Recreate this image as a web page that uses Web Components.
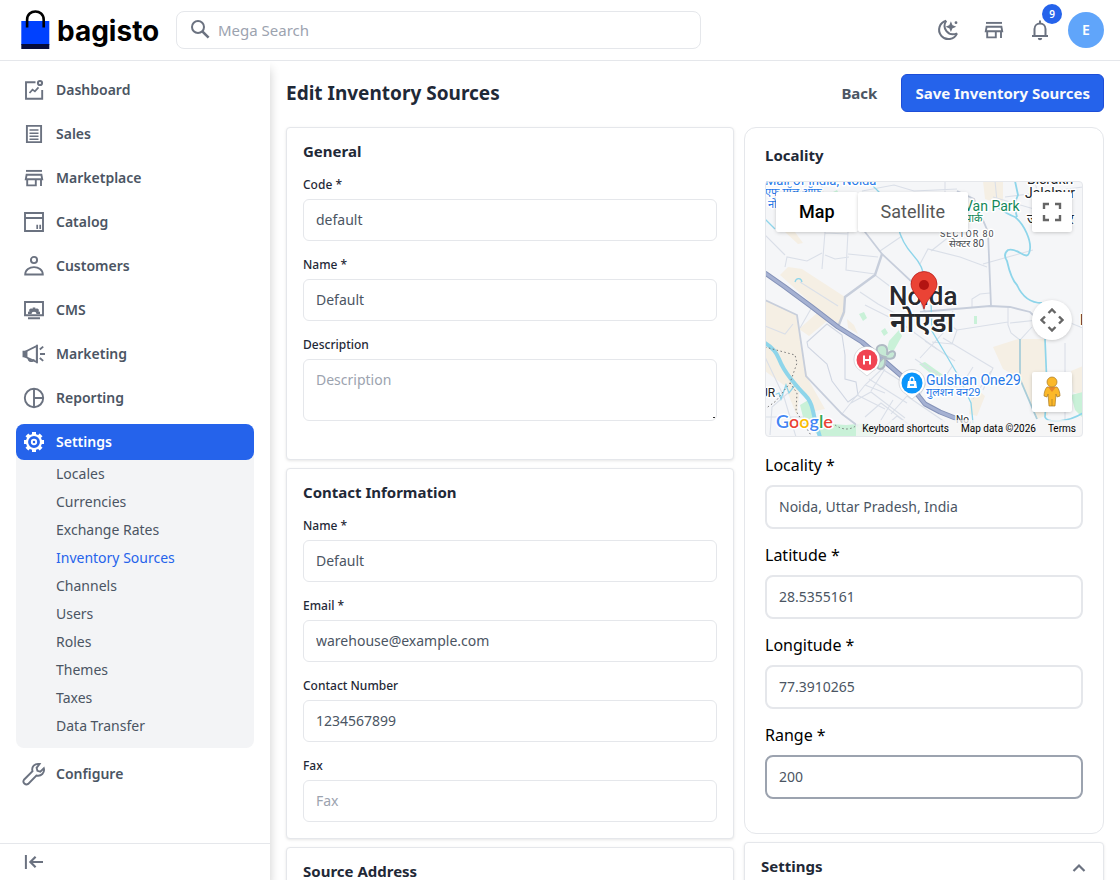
<!DOCTYPE html>
<html lang="en">
<head>
<meta charset="utf-8">
<meta name="viewport" content="width=device-width, initial-scale=1">
<title>Edit Inventory Sources</title>
<style>
  html, body { margin: 0; height: 100%; }
  body { font-family: "Noto Sans", "Open Sans", sans-serif; font-size: 14px; line-height: 20px; color: #1f2937; background: #fff; }
</style>
</head>
<body>
<app-shell>
  <app-header slot="header"></app-header>
  <side-nav slot="nav">
    <nav-item icon="dashboard">Dashboard</nav-item>
    <nav-item icon="sales">Sales</nav-item>
    <nav-item icon="store">Marketplace</nav-item>
    <nav-item icon="catalog">Catalog</nav-item>
    <nav-item icon="customer">Customers</nav-item>
    <nav-item icon="cms">CMS</nav-item>
    <nav-item icon="marketing">Marketing</nav-item>
    <nav-item icon="report">Reporting</nav-item>
    <nav-item icon="settings" active>Settings
      <sub-item slot="sub">Locales</sub-item>
      <sub-item slot="sub">Currencies</sub-item>
      <sub-item slot="sub">Exchange Rates</sub-item>
      <sub-item slot="sub" current>Inventory Sources</sub-item>
      <sub-item slot="sub">Channels</sub-item>
      <sub-item slot="sub">Users</sub-item>
      <sub-item slot="sub">Roles</sub-item>
      <sub-item slot="sub">Themes</sub-item>
      <sub-item slot="sub">Taxes</sub-item>
      <sub-item slot="sub">Data Transfer</sub-item>
    </nav-item>
    <nav-item icon="configure">Configure</nav-item>
  </side-nav>
  <page-toolbar heading="Edit Inventory Sources" back="Back" save="Save Inventory Sources"></page-toolbar>
  <form-columns>
    <form-card heading="General">
      <form-field label="Code *" value="default"></form-field>
      <form-field label="Name *" value="Default"></form-field>
      <form-field label="Description" placeholder="Description" multiline></form-field>
    </form-card>
    <form-card heading="Contact Information">
      <form-field label="Name *" value="Default"></form-field>
      <form-field label="Email *" value="warehouse@example.com"></form-field>
      <form-field label="Contact Number" value="1234567899"></form-field>
      <form-field label="Fax" placeholder="Fax"></form-field>
    </form-card>
    <form-card heading="Source Address">
      <form-field label="Country *" value="India"></form-field>
    </form-card>
    <form-card slot="aside" heading="Locality" roomy>
      <map-view></map-view>
      <form-field large label="Locality *" value="Noida, Uttar Pradesh, India"></form-field>
      <form-field large label="Latitude *" value="28.5355161"></form-field>
      <form-field large label="Longitude *" value="77.3910265"></form-field>
      <form-field large active label="Range *" value="200"></form-field>
    </form-card>
    <form-card slot="aside" heading="Settings" collapsible>
      <form-field label="Priority" value="0"></form-field>
    </form-card>
  </form-columns>
</app-shell>

<script>
const define = (name, render) => customElements.define(name, class extends HTMLElement {
  connectedCallback() {
    if (this.shadowRoot) return;
    const t = document.createElement('template');
    t.innerHTML = render(this);
    this.attachShadow({ mode: 'open' }).append(t.content.cloneNode(true));
  }
});

/* 24px line icons, drawn with the current colour */
const ICONS = {
  dashboard: '<path d="M13.5 4.2H4v16.6h16.2V12"/><circle cx="18" cy="5" r="2.1" stroke-width="2"/><path d="M7.5 15l3-3.4 2.4 1.8 3.6-4" stroke-width="1.700"/>',
  sales: '<path d="M4.9 3.9h14.2v16.2H4.9z"/><path d="M7.5 8h9M7.5 11.2h9M7.5 14.2h9M7.5 17.2h9" stroke-width="1.5"/>',
  store: '<path d="M4 4.9h16" stroke-width="1.9"/><path d="M4.6 8.8h14.8l.8 4.4H3.8zM5.2 13.2v6.2h8.6v-6.2M19 13.2V20"/>',
  catalog: '<path d="M3 3h18v18H3zM3 8h18"/><path d="M15.2 14.8V19M18.2 14.8V19" stroke-width="1.7"/>',
  customer: '<circle cx="12" cy="6" r="3.1"/><path d="M3.2 20.5c0-9.800 17.6-9.800 17.6 0z"/>',
  cms: '<path d="M3 4h18v13.2H3zM6 20.2h12"/><path d="M6 16v-2.200l1.500-.4-.5-1.600 2-1.500 1.300.7.5-1.500h2.400l.5 1.500 1.300-.7 2 1.500-.5 1.600 1.500.4V16h-3.500a2.500 2.200 0 0 0-5 0z" fill="currentColor" stroke="none"/>',
  marketing: '<path d="M2.600 10l12.200-6v16l-12.200-5.500zM15 2.800v18.400"/><path d="M1.500 9.800h3v4.400h-3z" fill="currentColor"/><path d="M6.500 16c0 4 5 4 5.200 1.200M17.800 7.500l3.400-2.900M18 12h5M17.800 16l3.400 2.900"/>',
  report: '<circle cx="12" cy="12" r="9.200"/><path d="M12 3v18M12 12h9"/>',
  settings: '<circle cx="12" cy="12" r="7" stroke-width="2.200"/><circle cx="12" cy="12" r="2.200" stroke-width="1.900"/><g stroke-width="4"><path d="M12 2v3M12 19v3M2 12h3M19 12h3M4.900 4.900l2 2M17.100 17.100l2 2M4.900 19.100l2-2M17.100 6.900l2-2"/></g>',
  configure: '<path d="M17.600 2c-5-.900-8.400 3-7.100 7.300L2 17.700c-1.900 2.800 1.500 5.900 4.200 4.200l8.200-8.400c4.800 1.200 8.600-2.700 7.400-7.300L18.300 9.600l-2.900-.800-.8-3z"/>',
  collapse: '<path d="M3.900 5v14" stroke-width="2"/><path d="M21 12H8.500M13.600 6.800L8.400 12l5.200 5.200" stroke-width="2.200"/>',
  search: '<circle cx="10" cy="9" r="6" stroke-width="2"/><path d="M14.300 13.300l6.300 6.300" stroke-width="2.600"/>',
  moon: '<path d="M10.200 2.700A9.300 9.300 0 1 0 21 15.300" stroke-width="2"/><path d="M10.200 2.700C5.500 10 12 19 21 15.300" stroke-width="2"/><path d="M14.900 5.300l1 2.400 2.400 1-2.400 1-1 2.400-1-2.400-2.400-1 2.400-1z" fill="currentColor" stroke-width="1.500"/><circle cx="20" cy="4.700" r="1.400" fill="currentColor" stroke="none"/>',
  bell: '<path d="M4 18h16M6.500 18v-7c0-7.300 11-7.300 11 0v7M12 5.300V2.500" stroke-width="2"/><path d="M9.800 20h4.400a2.200 2.200 0 0 1-4.400 0z" fill="currentColor" stroke="none"/>',
  up: '<path d="M6.500 15l5.500-5.500 5.500 5.500" stroke-width="2.200"/>'
};
define('ui-icon', el => `
  <style>:host { display: block; width: 24px; height: 24px; flex: none; color: #6b7280; } :host([inherit]) { color: inherit; } svg { display: block; width: 100%; height: 100%; }</style>
  <svg viewBox="0 0 24 24" fill="none" stroke="currentColor" stroke-width="1.9" aria-hidden="true">${ICONS[el.getAttribute('name')]}</svg>`);

define('app-shell', () => `
  <style>
    :host { display: grid; grid-template: auto minmax(0, 1fr) / 270px minmax(0, 1fr); height: 100vh; }
    header { grid-column: 1 / -1; border-bottom: 1px solid #e5e7eb; }
    nav { box-shadow: 0 8px 10px rgba(0, 0, 0, .2); position: relative; }
    .clip { display: grid; grid-template-columns: 100%; padding-right: 12px; margin-right: -12px; overflow: hidden; }
    main { overflow: auto; scrollbar-width: none; padding: 13px 16px 16px; }
  </style>
  <header><slot name="header"></slot></header>
  <div class="clip"><nav><slot name="nav"></slot></nav></div>
  <main><slot></slot></main>`);

define('brand-logo', () => `
  <style>
    :host { display: block; }
    a { display: flex; align-items: center; gap: 7px; color: #000; text-decoration: none; font: 700 28px/38px Inter, sans-serif; }
    svg { display: block; }
    span { padding-top: 2px; }
  </style>
  <a href="#"><svg width="30" height="40" viewBox="0 0 30 40" aria-hidden="true">
    <path d="M1.300 11h28v24h-28z" fill="#0041ff"/><path d="M1.300 34h28v5h-28z" fill="#060c3b"/>
    <path d="M7.100 17.500V9.700c0-11 16.600-11 16.600 0v7.800" fill="none" stroke="#000" stroke-width="2.600"/></svg><span>bagisto</span></a>`);

define('app-header', () => `
  <style>
    :host { display: flex; align-items: center; justify-content: space-between; gap: 24px; height: 60px; padding: 0 16px 0 20px; }
    .start { display: flex; align-items: center; gap: 16px; flex: 1; }
    brand-logo { width: 140px; }
    .search { display: flex; align-items: center; gap: 6px; flex: 1; max-width: 525px; height: 38px; box-sizing: border-box; border: 1px solid #e5e7eb; border-radius: 8px; padding: 0 11px; }
    input { flex: 1; min-width: 0; border: 0; outline: 0; padding: 0; background: none; color: #4b5563; font: 15px/24px "Noto Sans", sans-serif; }
    input::placeholder { color: #9ca3af; }
    .end { display: flex; align-items: center; gap: 10px; }
    .end button { position: relative; border: 0; background: none; padding: 6px; }
    .badge { position: absolute; top: -8px; right: -4px; width: 20px; border-radius: 10px; background: #2563eb; color: #fff; font: 600 10px/20px "Noto Sans", sans-serif; text-align: center; }
    .end .avatar { width: 36px; height: 36px; padding: 0; border-radius: 50%; background: #60a5fa; color: #fff; font: 600 14px/36px "Noto Sans", sans-serif; }
  </style>
  <div class="start">
    <brand-logo></brand-logo>
    <label class="search"><ui-icon name="search"></ui-icon><input type="text" placeholder="Mega Search" aria-label="Mega Search"></label>
  </div>
  <div class="end">
    <button aria-label="Dark mode"><ui-icon name="moon"></ui-icon></button>
    <button aria-label="Visit shop"><ui-icon name="store"></ui-icon></button>
    <button aria-label="Notifications"><ui-icon name="bell"></ui-icon><span class="badge">9</span></button>
    <button class="avatar">E</button>
  </div>`);

define('side-nav', () => `
  <style>
    :host { display: flex; flex-direction: column; height: 100%; background: #fff; }
    .list { flex: 1; min-height: 0; overflow: auto; scrollbar-width: none; display: flex; flex-direction: column; gap: 8px; padding: 11px 16px; }
    .foot { border-top: 1px solid #e5e7eb; padding: 6px 22px; }
    button { display: block; border: 0; background: none; padding: 0; }
  </style>
  <div class="list"><slot></slot></div>
  <div class="foot"><button aria-label="Collapse menu"><ui-icon name="collapse"></ui-icon></button></div>`);

define('nav-item', el => `
  <style>
    :host { display: block; flex: none; border-radius: 8px; color: #4b5563; }
    a { display: flex; align-items: center; gap: 10px; padding: 6px; border-radius: 8px; color: inherit; text-decoration: none; font-weight: 600; }
    :host([active]) { background: #f3f4f6; padding-bottom: 8px; }
    :host([active]) a { background: #2563eb; color: #fff; }
  </style>
  <a href="#"><ui-icon name="${el.getAttribute('icon')}" ${el.hasAttribute('active') ? 'inherit' : ''}></ui-icon><span><slot></slot></span></a>
  <slot name="sub"></slot>`);

define('sub-item', () => `
  <style>
    :host { display: block; padding: 4px 0 4px 40px; color: #4b5563; }
    :host([current]) { color: #2563eb; }
    a { color: inherit; text-decoration: none; display: block; }
  </style>
  <a href="#"><slot></slot></a>`);

define('page-toolbar', el => `
  <style>
    :host { display: flex; justify-content: space-between; align-items: center; margin-bottom: 15px; }
    h1 { margin: 0; font-size: 19px; line-height: 28px; font-weight: 700; }
    div { display: flex; align-items: center; gap: 10px; }
    button { font: 700 15px/24px "Noto Sans", sans-serif; padding: 6px 13px; border: 1px solid transparent; border-radius: 6px; background: none; color: #4b5563; }
    .save { background: #2563eb; border-color: #1d4ed8; color: #f9fafb; }
  </style>
  <h1>${el.getAttribute('heading')}</h1>
  <div><button>${el.getAttribute('back')}</button><button class="save">${el.getAttribute('save')}</button></div>`);

define('form-columns', () => `
  <style>
    :host { display: grid; grid-template-columns: minmax(0, 1fr) 360px; gap: 10px; align-items: start; }
    div { display: grid; gap: 8px; }
  </style>
  <div><slot></slot></div><div><slot name="aside"></slot></div>`);

define('form-card', el => `
  <style>
    :host { display: block; border: 1px solid #e5e7eb; border-radius: 4px; padding: 16px; background: #fff; box-shadow: 0 1px 3px rgba(0, 0, 0, .1); }
    :host([roomy]) { border-radius: 12px; padding: 20px; box-shadow: none; }
    header { display: flex; justify-content: space-between; align-items: flex-start; height: 17px; margin-bottom: 16px; }
    h2 { margin: 0; font-size: 15px; line-height: 15px; font-weight: 700; }
    button { border: 0; background: none; padding: 0; margin: -3px -4px 0 0; }
    .body { display: flex; flex-direction: column; gap: 16px; }
    :host([roomy]) .body { gap: 14px; padding-bottom: 14px; }
  </style>
  <header><h2>${el.getAttribute('heading')}</h2>${el.hasAttribute('collapsible') ? '<button aria-label="Toggle section"><ui-icon name="up"></ui-icon></button>' : ''}</header>
  <div class="body"><slot></slot></div>`);

define('form-field', el => {
  const value = el.getAttribute('value') || '', hint = el.getAttribute('placeholder') || '';
  return `
  <style>
    :host { display: block; }
    :host([multiline]) { padding-bottom: 22px; }
    label { display: block; margin-bottom: 6px; font-size: 12px; line-height: 16px; font-weight: 500; }
    input, textarea { display: block; width: 100%; box-sizing: border-box; margin: 0; padding: 10px 12px; border: 1px solid #e5e7eb; border-radius: 6px; outline: 0; background: #fff; color: #4b5563; font: 14px/20px "Noto Sans", sans-serif; }
    input { height: 42px; padding: 9px 12px 11px; }
    ::placeholder { color: #9ca3af; }
    ::-webkit-resizer { background: linear-gradient(#333, #333) 12px 12px / 2px 1px no-repeat; }
    :host([large]) label { margin-bottom: 8px; font-size: 16px; line-height: 24px; font-weight: 400; color: #000; }
    :host([large]) input { height: 44px; border-width: 2px; border-radius: 8px; }
    :host([active]) input { border-color: #9ca3af; }
  </style>
  <label for="control">${el.getAttribute('label')}</label>
  ${el.hasAttribute('multiline')
    ? `<textarea id="control" rows="2" placeholder="${hint}"></textarea>`
    : `<input id="control" type="text" value="${value}" placeholder="${hint}">`}`;
});

define('map-view', () => `
  <style>
    :host { display: block; position: relative; height: 256px; margin-bottom: 2px; overflow: hidden; border-radius: 4px; background: #f5f6f8; font-family: Roboto, "Noto Sans", sans-serif; }
    :host::after { content: ""; position: absolute; inset: 0; border: 1px solid #e5e7eb; border-radius: 4px; pointer-events: none; }
    svg { display: block; }
    .scene { width: 100%; height: 100%; }
    .halo { paint-order: stroke; stroke: #fff; stroke-width: 3px; stroke-linejoin: round; }
    button { border: 0; padding: 0; background: #fff; box-shadow: 0 1px 4px -1px rgba(0, 0, 0, .3); font: 18px/40px Roboto, sans-serif; color: #565656; }
    .types { position: absolute; left: 11px; top: 11px; display: flex; }
    .types button { padding: 0 23px; border-radius: 2px; }
    .types .on { color: #000; font-weight: 500; }
    .tool { position: absolute; right: 11px; width: 40px; height: 40px; display: grid; place-items: center; border-radius: 2px; }
    .full { top: 11px; } .pan { top: 119px; border-radius: 50%; } .person { top: 191px; }
    .legal { position: absolute; right: 0; bottom: 0; display: flex; gap: 12px; padding: 1px 7px 0 6px; background: rgba(245, 245, 245, .75); font-size: 10px; line-height: 16px; color: #000; }
    .legal a { color: inherit; text-decoration: none; }
  </style>
  <svg class="scene" viewBox="0 0 318 256" preserveAspectRatio="xMidYMid slice" role="img" aria-label="Map of Noida">
    <path fill="#f5efe4" d="M23 86l14 2 43 28v18l-7 9-26-20-32-29zM0 119l32 15 8 50 3 14 17 30-10 2-15-25-3 30-12-30-20-15zM228 166l25-8h27l3 76-11 4-17-40-17-10zM20 51l10 0 8 11-5 1zM218 0h20v24l-18-6zM208 205l12 10-8 20-8-2zM306 190l12-5v30l-10-4zM82 138l7 6 4 9-10-6zM34 148l18-16 10 8-18 15z"/>
    <path fill="#c9f1d8" d="M35 224l10-6 6 24 30 2 22-2 8 14H56l-16-12zM154 183l6-2 18 13-3 6zM122 168l2-8 10-11 3 6-9 16zM94 133l5-2 3 6-4 3zM116 150l4-3 3 5-4 3zM66 12l6-3 3 6-6 3zM209 135h3v8h-3zM306 214l12-3v26l-8-8z"/>
    <g fill="none" stroke="#dadfe8" stroke-width="1.100">
      <path d="M60 51l-3 37M60 74l10 4 14-2M83 51l-2 38 29 4M83 73l30 3M60 48l0 4 23 1M56 0l2 12 38 4M97 10l32-6 20 6 43-2M20 86l2-10 20 4 15-8M0 54l20 20M137 55l-22 15M110 94l33 25M95 111l18 12 22 12M100 124l36 18 36 26M180 0v50M155 83l8-15 32 8 27 10M166 70l28-22M225 112l-10 1-8 5v8M218 83l50-14M192 149l51-8M192 149l-10-7 6-12M243 126v18l3 8 9 7 12-13M245 142l28-3M155 177l24-26M192 149l-5 14-20-2M178 157l50 30-10 22M226 190l-18 28"/>
      <path stroke="#d0d6e2" d="M62 143l-20 18 1 5 19 17 5 17 16 21 10-7-2-13-11-3v-24l-3-20z"/>
      <path d="M47 126l-12 21M73 125l-38-24M77 233l23-29 17-16 22 14M100 204l20 8M86 222l20-11 34 26M92 214l28 14M100 236l16-14 26 20M110 249l18-30M118 247l14-12 14 10M126 233l16-18 38 26M150 178l44 30 14-22M160 160l30 20M168 214l20-30M120 188l-14 22M104 198l38 24M155 214l10-20 34 20"/>
      <path d="M0 176l19 40 12 40M5 254l2-28 16-14M0 236h40M270 0l6 30-48-14M240 16l78-10M300 240V162M303 141l15 6M230 0l2 20M0 145l20 8 8-10"/>
    </g>
    <g fill="none" stroke="#c7cedb">
      <path d="M98 30l2 21 17 22 30 28 14 32M155 131l70-6 20 1 20 5 8 8M192 10l17 8 14 33 3 74M0 119l32 15 9 61 36 38 16 12" stroke-width="1.800"/>
      <path d="M117 73l-7 21-30 22-1 15-6 15" stroke-width="2.400"/><path d="M255 158v40l17 40" stroke="#a9cdd9" stroke-width="1.800"/>
    </g>
    <g fill="none" stroke="#8ed5ea">
      <path d="M0 162q10 6 14 16t12 20 14 16 8 16 7 26" stroke-width="4"/>
      <path d="M232 26q12 8 18 10c10 8 16 24 15 32-2 16-12-3-22 1-5 4-3 8-1 11q4 18 10 24 8 18 25 18M250 0l3 14-4 10 3 12" stroke-width="1.800"/>
      <path d="M280 158l2 48-2 30c2 6 22 6 38-4" stroke-width="1.700"/>
      <path d="M133 46q4 16 15 28t11 24M166 120l1 30 13 22 14 24 12 26 2 20M0 38l10 10M108 5l6 6-8 3 14 8M30 101c1-4 6-5 7 0M4 216l10-4 2 6 5-14 3 8 6-8" stroke-width="1.300"/>
    </g>
    <g fill="none" stroke-linejoin="round"><path d="M0 92l20 14 27 20 26 20 24 15 20 17 23 20 20 25 15 8 30 12" stroke="#8492b8" stroke-width="5"/><path d="M0 92l20 14 27 20 26 20 24 15 20 17 23 20 20 25 15 8 30 12" stroke="#a5b1d2" stroke-width="3"/></g>
    <g fill="#c6e9d5" stroke="#b0bac4" stroke-width="2"><path d="M120 176c-10-2-11-12-3-12 5 0 6 5 5 10 4-6 9-4 8 0-1 5-7 4-10 3 1 6-1 11-5 11s-4-6 5-12z"/></g>
    <path d="M0 166l30 8 2 8-7 20-14 18-11 8M25 202l7 10-1 18 16 26M70 244q12 8 22 0" fill="none" stroke="#777" stroke-dasharray="1.500 2.500"/>
    <g class="halo" font-family='Roboto, "Noto Sans", sans-serif'>
      <g fill="#2779e8" font-size="13"><text x="0" y="4">Mall of India, Noida</text><text x="0" y="15" font-size="11">एफ मॉल ऑफ</text><text x="3" y="27" font-size="11">नोएडा</text><text x="161" y="204" font-size="14">Gulshan One29</text><text x="161" y="215" font-size="11">गुलशन वन29</text></g>
      <g fill="#12885a" font-size="14"><text x="199" y="30">Van Park</text><text x="200" y="41" font-size="11">पार्क</text></g>
      <g fill="#4a4d52"><text x="175" y="56" font-size="9" letter-spacing="1">SECTOR 80</text><text x="184" y="66" font-size="10">सेक्टर 80</text></g>
      <g fill="#222528" font-size="14"><text x="262" y="3">Bisrakh</text><text x="260" y="17">Jalalpur</text><text x="262" y="43">जलालपुर</text><text x="-5" y="216" font-size="12">UR</text><text x="315" y="144">D</text><text x="191" y="242" font-size="10">No</text></g>
      <g fill="#282a2e" font-weight="500"><text x="125" y="151" font-size="28" font-weight="600">नोएडा</text><text x="124" y="124" font-size="26">Noida</text></g>
    </g>
    <g fill="#fff" stroke="#8a919c" stroke-opacity=".3"><path d="M102 195l-6-5a13 13 0 1 1 12 0z"/><path d="M147 218l-6-5a13 13 0 1 1 12 0z"/></g>
    <circle cx="102" cy="179" r="10.500" fill="#f04452"/><circle cx="147" cy="202" r="10.500" fill="#0a95fb"/>
    <path d="M99 174.500v9M105 174.500v9M99 179h6" stroke="#fff" stroke-width="2"/>
    <path d="M143 200h8l1 7h-10z" fill="#fff"/><path d="M145 200c0-5 4-5 4 0" fill="none" stroke="#fff" stroke-width="1.300"/><path d="M145 204h4" stroke="#0a95fb" stroke-width="1.300"/>
    <path d="M159 128c-2-10-13-16-13-25a13 12.500 0 0 1 26 0c0 9-11 15-13 25z" fill="#ea4335" stroke="#b31412" stroke-width=".7"/><circle cx="159" cy="104" r="5" fill="#b31412"/>
    <g class="halo" font-family="Lato, sans-serif" font-size="18" font-weight="600"><text x="11" y="247"><tspan fill="#4285f4">G</tspan><tspan fill="#ea4335">o</tspan><tspan fill="#fbbc04">o</tspan><tspan fill="#4285f4">g</tspan><tspan fill="#34a853">l</tspan><tspan fill="#ea4335">e</tspan></text></g>
  </svg>
  <div class="types"><button class="on">Map</button><button>Satellite</button></div>
  <button class="tool full" aria-label="Toggle fullscreen"><svg width="20" height="20" fill="none" stroke="#666" stroke-width="2.400"><path d="M2 7V2h5M13 2h5v5M18 13v5h-5M7 18H2v-5"/></svg></button>
  <button class="tool pan" aria-label="Map camera controls"><svg width="24" height="24" fill="none" stroke="#666" stroke-width="2.400"><path d="M8.500 5L12 1.500 15.500 5M8.500 19l3.500 3.500 3.500-3.500M5 8.500L1.500 12 5 15.500M19 8.500l3.500 3.500-3.500 3.500"/></svg></button>
  <button class="tool person" aria-label="Street View"><svg width="20" height="32" viewBox="0 0 20 32" fill="#fbb829" stroke="#a87a25" stroke-width=".7"><path d="M5 11h10c2 2 3 6 3 9l-3 1-1-3-1 12H7L6 18l-1 3-3-1c0-3 1-7 3-9z"/><path d="M10 23v7"/><path d="M6 11h8l-4 5z" fill="#e8872a" stroke="none"/><circle cx="10" cy="6" r="5"/></svg></button>
  <div class="legal"><a href="#">Keyboard shortcuts</a><span>Map data ©2026</span><a href="#">Terms</a></div>`);
</script>
</body>
</html>
